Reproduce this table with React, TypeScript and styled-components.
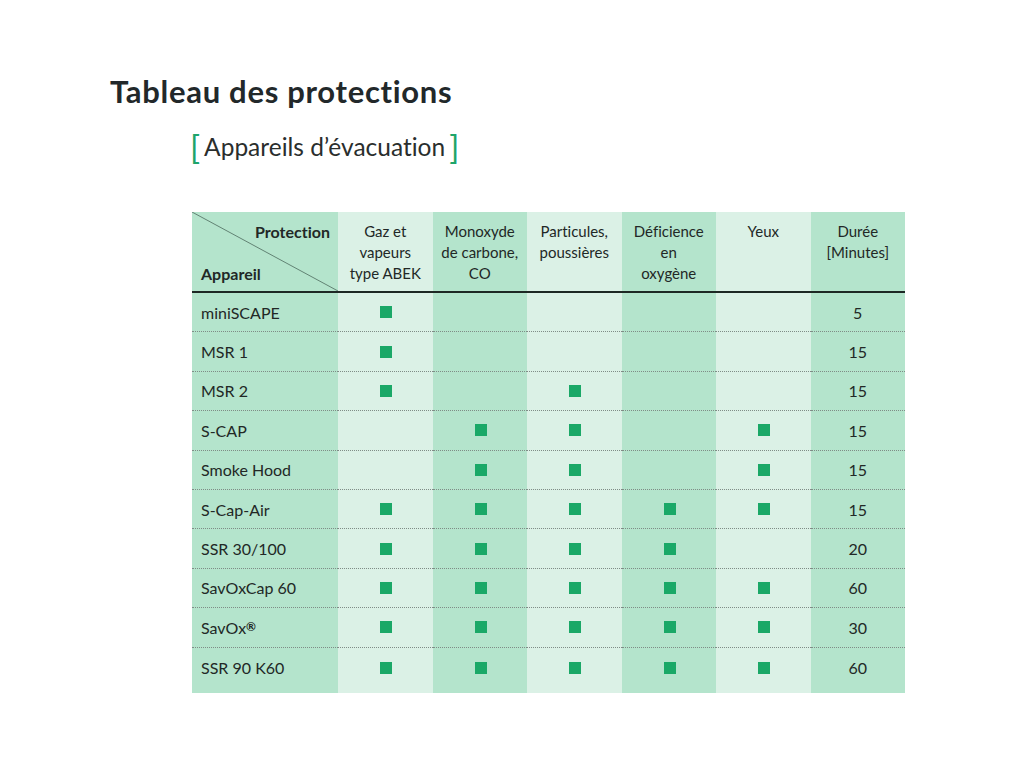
import React from "react";
import styled, { createGlobalStyle } from "styled-components";

const Global = createGlobalStyle`
  html, body { margin: 0; padding: 0; background: #ffffff; }
  body {
    font-family: Lato, "Open Sans", "Liberation Sans", sans-serif;
    color: #222826;
    font-variant-ligatures: none;
    font-feature-settings: "liga" 0, "clig" 0;
  }
`;

const DARK = "#b4e4cc";
const LIGHT = "#dbf1e6";

const Page = styled.div`
  width: 1024px;
  height: 768px;
  box-sizing: border-box;
  padding: 72px 0 0 110px;
`;

const Title = styled.h1`
  margin: 0;
  font-size: 31px;
  line-height: 38px;
  font-weight: 700;
  color: #22282a;
  letter-spacing: 0.7px;
`;

const Subtitle = styled.div`
  margin: 20px 0 0 80px;
  display: flex;
  align-items: center;
  gap: 4px;
  font-size: 24.5px;
  line-height: 34px;
  color: #2a2e2d;
`;

const Bracket = styled.span`
  color: #1ea56b;
  font-size: 33px;
  font-weight: 400;
  line-height: 34px;
  transform: translateY(-1px);
`;

const Grid = styled.div`
  margin: 48px 0 0 82px;
  display: grid;
  grid-template-columns: 146px repeat(6, 94.5px);
  width: 713px;
`;

const Cell = styled.div<{ $col: number }>`
  background: ${(p) => (p.$col % 2 === 0 ? DARK : LIGHT)};
  box-sizing: border-box;
`;

const HeadCell = styled(Cell)`
  height: 81px;
  border-bottom: 2px solid #1d2824;
  padding-top: 9px;
  font-size: 15px;
  line-height: 21px;
  text-align: center;
`;

const Corner = styled(Cell)`
  position: relative;
  height: 81px;
  border-bottom: 2px solid #1d2824;
  display: flex;
  flex-direction: column;
  justify-content: space-between;
  padding: 9px 8px 7px 9px;
  font-size: 16px;
  line-height: 21px;
  font-weight: 700;
`;

const CornerTop = styled.span`
  align-self: flex-end;
`;

const CornerBottom = styled.span`
  align-self: flex-start;
`;

const Diagonal = styled.svg`
  position: absolute;
  inset: 0;
  width: 100%;
  height: 100%;
  pointer-events: none;
`;

const BodyCell = styled(Cell)<{ $last: boolean }>`
  height: ${(p) => (p.$last ? "45px" : "39.4px")};
  border-bottom: ${(p) => (p.$last ? "none" : "1px dotted #7f8c86")};
  display: flex;
  align-items: center;
  justify-content: center;
  padding-bottom: ${(p) => (p.$last ? "5px" : "0")};
  font-size: 16px;
`;

const NameCell = styled(BodyCell)`
  justify-content: flex-start;
  padding-left: 9px;
`;

const Mark = styled.span`
  display: block;
  width: 12px;
  height: 12px;
  background: #1aa867;
  margin-left: 2px;
`;

const Sup = styled.sup`
  font-size: 12px;
  font-weight: 700;
  line-height: 0;
  vertical-align: 4px;
`;

const headers: React.ReactNode[] = [
  <>Gaz et<br />vapeurs<br />type ABEK</>,
  <>Monoxyde<br />de carbone,<br />CO</>,
  <>Particules,<br />poussières</>,
  <>Déficience<br />en<br />oxygène</>,
  <>Yeux</>,
  <>Durée<br />[Minutes]</>,
];

type Row = { name: React.ReactNode; marks: boolean[]; dur: string };

const rows: Row[] = [
  { name: "miniSCAPE", marks: [true, false, false, false, false], dur: "5" },
  { name: "MSR 1", marks: [true, false, false, false, false], dur: "15" },
  { name: "MSR 2", marks: [true, false, true, false, false], dur: "15" },
  { name: "S-CAP", marks: [false, true, true, false, true], dur: "15" },
  { name: "Smoke Hood", marks: [false, true, true, false, true], dur: "15" },
  { name: "S-Cap-Air", marks: [true, true, true, true, true], dur: "15" },
  { name: "SSR 30/100", marks: [true, true, true, true, false], dur: "20" },
  { name: "SavOxCap 60", marks: [true, true, true, true, true], dur: "60" },
  { name: <>SavOx<Sup>®</Sup></>, marks: [true, true, true, true, true], dur: "30" },
  { name: "SSR 90 K60", marks: [true, true, true, true, true], dur: "60" },
];

export default function App() {
  return (
    <>
      <Global />
      <Page>
        <Title>Tableau des protections</Title>
        <Subtitle>
          <Bracket>[</Bracket>
          <span>Appareils d’évacuation</span>
          <Bracket>]</Bracket>
        </Subtitle>
        <Grid>
          <Corner $col={0}>
            <Diagonal viewBox="0 0 100 100" preserveAspectRatio="none">
              <line x1="0" y1="0" x2="100" y2="100" stroke="#4d6a5d" strokeWidth="0.8" vectorEffect="non-scaling-stroke" />
            </Diagonal>
            <CornerTop>Protection</CornerTop>
            <CornerBottom>Appareil</CornerBottom>
          </Corner>
          {headers.map((h, i) => (
            <HeadCell key={i} $col={i + 1}>{h}</HeadCell>
          ))}
          {rows.map((r, ri) => {
            const last = ri === rows.length - 1;
            return (
              <React.Fragment key={ri}>
                <NameCell $col={0} $last={last}>{r.name}</NameCell>
                {r.marks.map((m, mi) => (
                  <BodyCell key={mi} $col={mi + 1} $last={last}>{m ? <Mark /> : null}</BodyCell>
                ))}
                <BodyCell $col={6} $last={last}>{r.dur}</BodyCell>
              </React.Fragment>
            );
          })}
        </Grid>
      </Page>
    </>
  );
}
